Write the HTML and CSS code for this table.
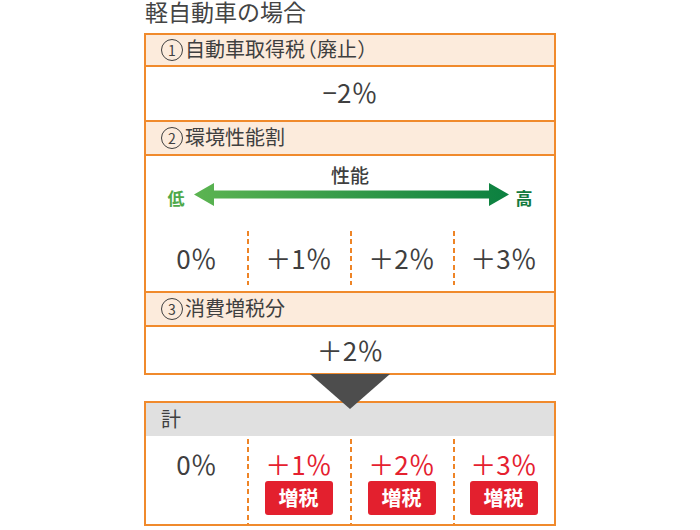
FILE: index.html
```html
<!DOCTYPE html>
<html lang="ja">
<head>
<meta charset="utf-8">
<link rel="stylesheet" href="styles.css">
</head>
<body>
<div class="wrap">
  <div class="title">軽自動車の場合</div>
  <div class="stack">
    <div class="head"><span class="num">1</span>自動車取得税<span class="paren">（</span>廃止<span class="paren">）</span></div>
    <div class="value">−2％</div>
    <div class="head"><span class="num">2</span>環境性能割</div>
    <div class="perf">
      <div class="perf-label">性能</div>
      <div class="arrow-row">
        <span class="low">低</span>
        <svg class="arrow" width="315" height="23" viewBox="0 0 315 23">
          <defs>
            <linearGradient id="g" x1="0" x2="1" y1="0" y2="0">
              <stop offset="0" stop-color="#5cb451"/>
              <stop offset="1" stop-color="#0b8040"/>
            </linearGradient>
          </defs>
          <path d="M0 11.5 L20 0 L20 7.5 L295 7.5 L295 0 L315 11.5 L295 23 L295 15.5 L20 15.5 L20 23 Z" fill="url(#g)"/>
        </svg>
        <span class="high">高</span>
      </div>
      <div class="cols perf-cols">
        <div class="col">0％</div>
        <div class="col dash">＋1％</div>
        <div class="col dash">＋2％</div>
        <div class="col dash">＋3％</div>
      </div>
    </div>
    <div class="head"><span class="num">3</span>消費増税分</div>
    <div class="value value3">＋2％</div>
  </div>
  <div class="connector"></div>
  <div class="total">
    <div class="total-head">計</div>
    <div class="cols total-cols">
      <div class="tcol"><span class="pct">0％</span></div>
      <div class="tcol dash"><span class="pct red">＋1％</span><span class="badge">増税</span></div>
      <div class="tcol dash"><span class="pct red">＋2％</span><span class="badge">増税</span></div>
      <div class="tcol dash"><span class="pct red">＋3％</span><span class="badge">増税</span></div>
    </div>
  </div>
</div>
</body>
</html>
```

FILE: styles.css
```css
* { box-sizing: border-box; }
html, body { margin: 0; padding: 0; background: #fff; }
body {
  font-family: "Noto Sans CJK JP", "Noto Sans", sans-serif;
  color: #3f3f3f;
}
.wrap {
  width: 412px;
  margin-left: 144px;
}
.title {
  font-size: 23px;
  font-weight: 400;
  line-height: 23px;
  height: 33px;
  padding-left: 1px;
  color: #444;
}
.stack {
  border: 2px solid #f08a2c;
  display: flex;
  flex-direction: column;
}
.head {
  background: #fcebdc;
  height: 34px;
  padding-left: 15px;
  border-bottom: 2px solid #f08a2c;
  font-size: 20px;
  display: flex;
  align-items: center;
  padding-bottom: 3px;
}
.stack > .head:first-child { height: 32px; }
.num {
  display: inline-flex;
  align-items: center;
  justify-content: center;
  width: 22px;
  height: 22px;
  border: 1.5px solid #3f3f3f;
  border-radius: 50%;
  font-size: 14px;
  line-height: 1;
  margin-right: 2px;
  margin-top: 2px;
}
.paren {
  font-feature-settings: "palt";
  margin: 0 1px;
}
.value {
  height: 55px;
  border-bottom: 2px solid #f08a2c;
  display: flex;
  align-items: center;
  justify-content: center;
  font-size: 26px;
  padding-bottom: 4px;
}
.value3 {
  height: 46px;
  border-bottom: none;
  padding-bottom: 2px;
}
.perf {
  height: 137px;
  border-bottom: 2px solid #f08a2c;
  padding-top: 9px;
  display: flex;
  flex-direction: column;
}
.perf-label {
  text-align: center;
  font-size: 19px;
  line-height: 20px;
  font-weight: 500;
}
.arrow-row {
  margin-top: -2px;
  height: 23px;
  display: flex;
  align-items: center;
  justify-content: center;
}
.low, .high {
  font-size: 17px;
  font-weight: 700;
  line-height: 17px;
  width: 17px;
  margin-top: 6px;
}
.low { color: #4fa94a; margin-right: 9px; }
.high { color: #127a3e; margin-left: 7px; }
.arrow { display: block; }
.cols {
  display: grid;
  grid-template-columns: 101px 103px 103px 101px;
}
.perf-cols {
  margin-top: 25px;
  height: 54px;
}
.col {
  display: flex;
  align-items: center;
  justify-content: center;
  font-size: 26px;
  padding-bottom: 1px;
}
.dash {
  background-image: repeating-linear-gradient(to bottom, #ee8426 0, #ee8426 5px, transparent 5px, transparent 8.4px);
  background-size: 2px 100%;
  background-repeat: no-repeat;
  background-position: 0 0;
}
.connector {
  height: 26px;
  position: relative;
  z-index: 2;
}
.connector::after {
  content: "";
  position: absolute;
  top: -1px;
  left: 50%;
  margin-left: -40.5px;
  width: 0;
  height: 0;
  border-left: 40.5px solid transparent;
  border-right: 40.5px solid transparent;
  border-top: 35px solid #4d4d4d;
}
.total {
  border: 2px solid #f08a2c;
  height: 125px;
  display: flex;
  flex-direction: column;
}
.total-head {
  background: #e0e0e0;
  height: 33px;
  font-size: 20px;
  padding-left: 15px;
  display: flex;
  align-items: center;
  padding-bottom: 3px;
}
.total-cols {
  flex: 1;
  padding-top: 3px;
}
.tcol {
  display: flex;
  flex-direction: column;
  align-items: center;
  padding-top: 9px;
}
.pct {
  font-size: 26px;
  line-height: 32px;
  height: 32px;
}
.red { color: #e5212f; }
.badge {
  margin-top: 1px;
  width: 68px;
  height: 34px;
  background: #e3202e;
  color: #fff;
  border-radius: 3px;
  font-size: 20px;
  font-weight: 700;
  line-height: 33px;
  text-align: center;
}
```
